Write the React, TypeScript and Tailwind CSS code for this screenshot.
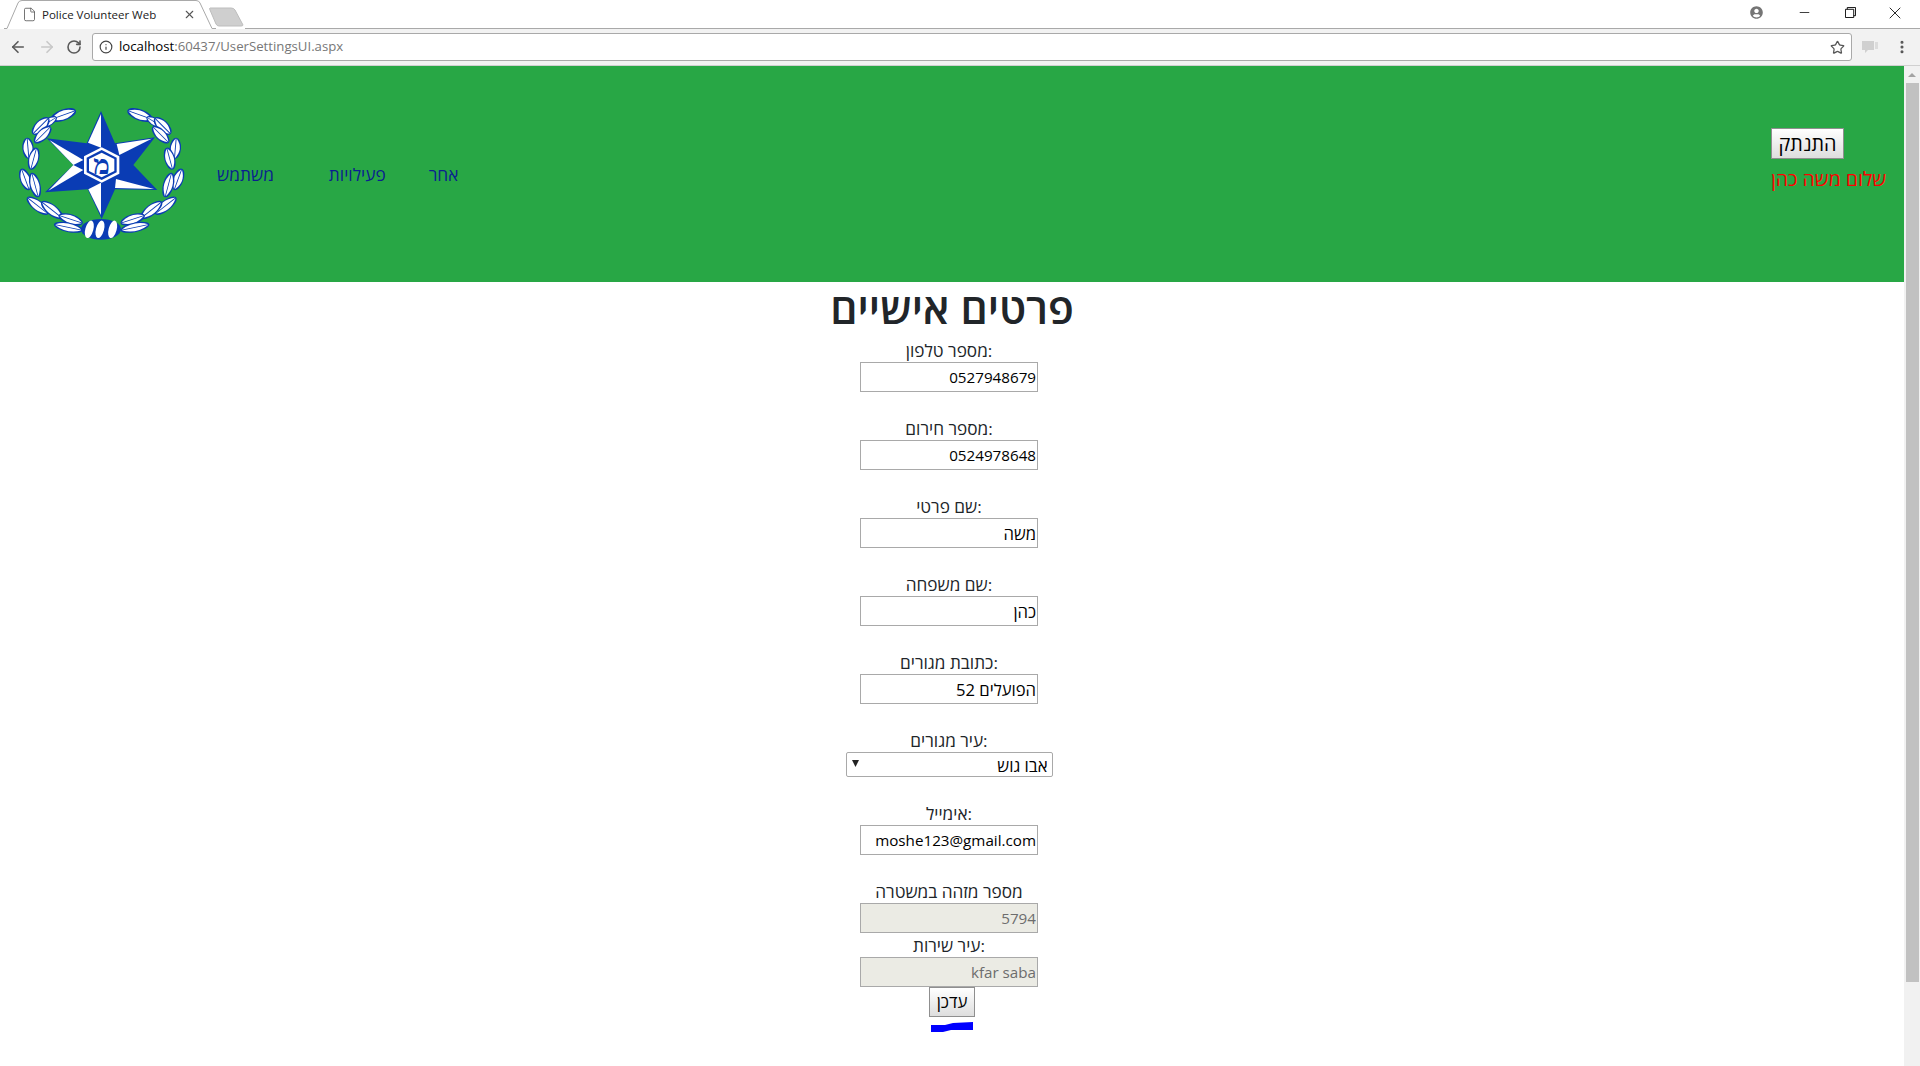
import { ArrowLeft, ArrowRight, RotateCw, Info, Star, File, X, Minus, EllipsisVertical } from "lucide-react";
import { FaUserCircle } from "react-icons/fa";

const leaves = [
  [190, 75, -20, 40, 17],
  [148, 95, -32, 26, 12],
  [122, 108, -45, 34, 17],
  [128, 134, -45, 34, 16],
  [84, 175, 85, 32, 17],
  [101, 206, -75, 34, 16],
  [76, 268, 70, 34, 16],
  [105, 285, 75, 38, 16],
  [113, 347, 38, 40, 16],
  [156, 360, 38, 40, 16],
  [212, 388, 18, 38, 15],
  [205, 412, 12, 44, 14],
];

function Wreath() {
  return (
    <>
      {leaves.map(([x, y, r, a, b], i) => (
        <g key={i} transform={`translate(${x} ${y}) rotate(${r})`}>
          <ellipse rx={a} ry={b} fill="#0a3cb4" />
          <path d={`M${-a * 0.92} ${-b * 0.08} Q0 ${-b * 1.5} ${a * 0.92} ${-b * 0.08} Z`} fill="#fff" />
          <path d={`M${-a * 0.92} ${b * 0.08} Q0 ${b * 1.5} ${a * 0.92} ${b * 0.08} Z`} fill="#fff" />
        </g>
      ))}
    </>
  );
}

function Logo() {
  return (
    <svg viewBox="0 0 600 480" className="w-[200px] h-[160px] shrink-0">
      <Wreath />
      <g transform="translate(610 0) scale(-1 1)">
        <Wreath />
      </g>
      <ellipse cx="303" cy="418" rx="60" ry="31" fill="#0a3cb4" />
      {[268, 300, 338].map((x) => (
        <ellipse key={x} cx={x} cy="418" rx="12" ry="27" transform={`rotate(15 ${x} 418)`} fill="#fff" />
      ))}
      {/* star */}
      <polygon
        points="303,63 345,160 465,142 400,225 472,300 345,298 305,387 263,298 135,307 220,225 140,145 260,160"
        fill="#0a3cb4"
      />
      <polygon points="303,72 264,158 303,173" fill="#fff" />
      <polygon points="455,146 350,162 358,195" fill="#fff" />
      <polygon points="462,297 348,267 345,294" fill="#fff" />
      <polygon points="303,375 265,298 303,278" fill="#fff" />
      <polygon points="145,302 220,225 250,240" fill="#fff" />
      <polygon points="148,150 220,225 250,210" fill="#fff" />
      <polygon points="305,172 358,199 358,251 305,278 252,251 252,199" fill="#fff" />
      <polygon points="305,180 350,203 350,247 305,270 260,247 260,203" fill="#0a3cb4" />
      <polygon points="305,188 343,207 343,243 305,262 267,243 267,207" fill="#fff" />
      <text x="305" y="253" textAnchor="middle" fontSize="84" fontWeight="700" fill="#0a3cb4" fontFamily="'Liberation Serif', serif">
        מ
      </text>
    </svg>
  );
}

function TabStrip() {
  return (
    <div className="flex h-[29px] items-start bg-white relative">
      <div className="relative w-[212px] h-[29px] ml-[4px] flex items-center pl-[18px] pr-[8px]">
        <svg viewBox="0 0 212 29" className="absolute inset-0 w-full h-full">
          <path d="M0 28.5 H3 L14 3 Q15 0.5 18 0.5 H192 Q195 0.5 196 3 L208 28.5 H212" fill="#fff" stroke="#a9a9a9" />
        </svg>
        <File size={15} strokeWidth={1.3} className="relative text-[#555]" />
        <span className="relative ml-[5px] text-[11.5px] text-[#222] flex-1">Police Volunteer Web</span>
        <X size={13} strokeWidth={2} className="relative text-[#555] mr-[12px]" />
      </div>
      <svg viewBox="0 0 36 20" className="w-[36px] h-[20px] mt-[7px] -ml-[7px]">
        <path d="M1 1 H22 Q25 1 26 3 L34 18 Q34 19 32 19 H10 Q8 19 7 17 L1 3 Q0 1 1 1Z" fill="#cfcfcf" stroke="#bdbdbd" />
      </svg>
      <div className="flex-1 h-[29px] border-b border-[#a9a9a9] flex items-center justify-end">
        <FaUserCircle size={13} className="text-[#757575] mr-[34px] mb-[3px]" />
        <Minus size={15} strokeWidth={1.2} className="text-black mr-[33px] mb-[3px]" />
        <svg viewBox="0 0 12 12" className="w-[11px] h-[11px] mr-[29px] mb-[3px]" fill="none" stroke="#000">
          <path d="M0.5 2.5 H9.5 V11.5 H0.5 Z M2.5 2.5 V0.5 H11.5 V9.5 H9.5" />
        </svg>
        <X size={20} strokeWidth={1} className="text-black mr-[15px] mb-[3px]" />
      </div>
    </div>
  );
}

function Toolbar() {
  return (
    <div className="flex h-[37px] items-center bg-[#f2f2f2] border-b border-[#d0d0d0]">
      <ArrowLeft size={18} strokeWidth={2.2} className="ml-[9px] text-[#5a5a5a]" />
      <ArrowRight size={18} strokeWidth={2.2} className="ml-[11px] text-[#c8c8c8]" />
      <RotateCw size={16} strokeWidth={2.4} className="ml-[10px] text-[#5a5a5a]" />
      <div className="ml-[10px] w-[1760px] h-[28px] flex items-center bg-white border border-[#a9a9a9] rounded-[3px] pl-[6px]">
        <Info size={14} strokeWidth={2} className="text-[#444]" />
        <span className="ml-[6px] text-[13.2px] text-black">
          localhost<span className="text-[#777]">:60437/UserSettingsUI.aspx</span>
        </span>
        <Star size={15} strokeWidth={2} className="ml-auto mr-[6px] text-[#555]" />
      </div>
      <svg viewBox="0 0 16 14" className="ml-[10px] w-[16px] h-[14px]">
        <path d="M0 1 H12 V10 H6 L3 13 V10 H0Z" fill="#d0d0d0" />
        <path d="M13 2 H16 V9 H13Z" fill="#dcdcdc" />
      </svg>
      <EllipsisVertical size={16} strokeWidth={2.6} className="ml-[16px] text-[#555]" />
    </div>
  );
}

function Header() {
  return (
    <div className="flex h-[216px] bg-[#28a745] items-center">
      <div className="mt-[-8px]">
        <Logo />
      </div>
      <nav className="flex items-center text-[17.3px] text-[#0b1f8f] ml-[17px] mt-[2px]">
        <span>משתמש</span>
        <span className="ml-[55px]">פעילויות</span>
        <span className="ml-[43px]">אחר</span>
      </nav>
      <div className="ml-auto mr-[17px] self-start pt-[62px] w-[116px]">
        <button className="block w-[73px] h-[31px] text-[19.8px] leading-none text-black border border-[#8f8f8f] bg-gradient-to-b from-white to-[#dedede]">
          התנתק
        </button>
        <div className="mt-[8px] text-[19.5px] leading-[24px] text-[#ff0000] whitespace-nowrap">שלום משה כהן</div>
      </div>
    </div>
  );
}

function Field({ label, value, disabled, last, he }: { label: string; value: string; disabled?: boolean; last?: boolean; he?: boolean }) {
  return (
    <div className={`flex flex-col items-center ${last ? "" : "mb-6"}`}>
      <label className="h-6 text-[17.2px] leading-[25px] text-[#212529]">{label}</label>
      <input
        readOnly
        value={value}
        className={`w-[178px] h-[30px] border border-[#a9a9a9] text-right pr-px outline-none ${he ? "text-[16.6px]" : "text-[15.2px]"} ${
          disabled ? "bg-[#ebebe4] text-[#6d6d6d]" : "bg-white text-black"
        }`}
      />
    </div>
  );
}

function Form() {
  return (
    <div className="flex flex-col items-center">
      <h1 className="h-12 mb-2 text-[42.6px] leading-[50px] font-semibold text-[#212529]">פרטים אישיים</h1>
      <div className="flex flex-col items-center mr-[6px]">
        <Field label="מספר טלפון:" value="0527948679" />
        <Field label="מספר חירום:" value="0524978648" />
        <Field label="שם פרטי:" value="משה" he />
        <Field label="שם משפחה:" value="כהן" he />
        <Field label="כתובת מגורים:" value="הפועלים 52" he />
        <div className="flex flex-col items-center mb-6">
          <label className="h-6 text-[17.2px] leading-[25px] text-[#212529]">עיר מגורים:</label>
          <div className="relative w-[207px] h-[25px]">
            <select dir="rtl" className="w-full h-full appearance-none border border-[#a9a9a9] rounded-[2px] bg-white text-[16.8px] text-black pr-[4px] outline-none">
              <option>אבו גוש</option>
            </select>
            <svg viewBox="0 0 8 8" className="absolute left-[6px] top-[8px] w-[7px] h-[7px]">
              <path d="M0 0 H8 L4 8Z" fill="#222" />
            </svg>
          </div>
        </div>
        <Field label="אימייל:" value="moshe123@gmail.com" />
        <Field label="מספר מזהה במשטרה" value="5794" disabled last />
        <Field label="עיר שירות:" value="kfar saba" disabled last />
      </div>
      <button className="w-[46px] h-[30px] text-[16.8px] leading-none text-black border border-[#8f8f8f] bg-gradient-to-b from-white to-[#dedede]">
        עדכן
      </button>
      <svg viewBox="0 0 42 10" className="w-[42px] h-[10px] mt-[5px]">
        <path d="M0 3 L14 3 L22 1 L42 0 V8 L20 8 L12 10 L0 10Z" fill="#0000ff" />
      </svg>
    </div>
  );
}

function Scrollbar() {
  return (
    <div className="w-4 shrink-0 bg-[#f1f1f1] flex flex-col items-center">
      <svg viewBox="0 0 8 4" className="w-[8px] h-[4px] mt-[7px]">
        <path d="M4 0 L8 4 H0Z" fill="#a3a3a3" />
      </svg>
      <div className="w-[13px] h-[899px] bg-[#c1c1c1] mt-[6px]" />
    </div>
  );
}

export default function App() {
  return (
    <div className="flex flex-col h-[1066px] overflow-hidden bg-white font-['Open_Sans','Noto_Sans','Liberation_Sans',sans-serif]">
      <TabStrip />
      <Toolbar />
      <div className="flex flex-1 min-h-0">
        <div className="flex flex-col flex-1">
          <Header />
          <Form />
        </div>
        <Scrollbar />
      </div>
    </div>
  );
}
